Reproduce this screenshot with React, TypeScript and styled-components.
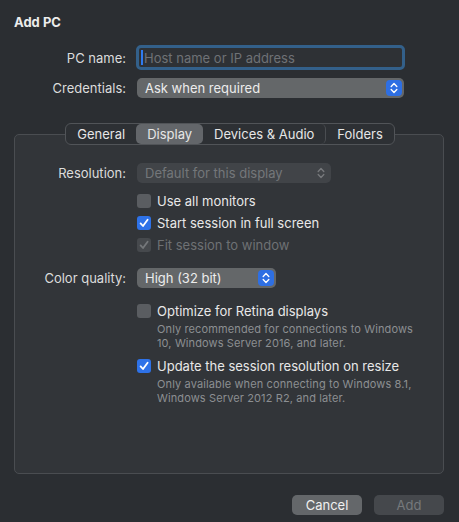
import React from "react";
import styled, { createGlobalStyle } from "styled-components";

const GlobalStyle = createGlobalStyle`
  html, body {
    margin: 0;
    padding: 0;
    background: #2b2e32;
  }
  body {
    font-family: "Inter", "Liberation Sans", sans-serif;
    -webkit-font-smoothing: antialiased;
  }
`;

const Stepper: React.FC<{ disabled?: boolean }> = ({ disabled }) => (
  <StepperBox $disabled={disabled}>
    <svg width="8" height="12" viewBox="0 0 8 12" fill="none">
      <path
        d="M1.2 4.4 L4 1.6 L6.8 4.4 M1.2 7.6 L4 10.4 L6.8 7.6"
        stroke={disabled ? "#74777a" : "#ffffff"}
        strokeWidth="1.4"
        strokeLinecap="round"
        strokeLinejoin="round"
      />
    </svg>
  </StepperBox>
);

const CheckMark: React.FC<{ color: string }> = ({ color }) => (
  <svg width="12" height="12" viewBox="0 0 12 12" fill="none">
    <path
      d="M2.6 6.4 L5 9 L9.6 2.8"
      stroke={color}
      strokeWidth="1.8"
      strokeLinecap="round"
      strokeLinejoin="round"
    />
  </svg>
);

type CheckProps = { checked?: boolean; disabled?: boolean; label: string };

const Check: React.FC<CheckProps> = ({ checked, disabled, label }) => (
  <CheckRow>
    <Box $checked={checked} $disabled={disabled}>
      {checked && <CheckMark color={disabled ? "#75787b" : "#ffffff"} />}
    </Box>
    <CheckLabel $disabled={disabled}>{label}</CheckLabel>
  </CheckRow>
);

const tabs = ["General", "Display", "Devices & Audio", "Folders"];

export default function App() {
  return (
    <>
      <GlobalStyle />
      <Window>
        <Title>Add PC</Title>
        <TopForm>
          <Label>PC name:</Label>
          <TextField>
            <Caret />
            <Placeholder>Host name or IP address</Placeholder>
          </TextField>
          <Label>Credentials:</Label>
          <Popup $width="267px">
            <PopupText>Ask when required</PopupText>
            <Stepper />
          </Popup>
        </TopForm>

        <Tabs>
          {tabs.map((t, i) => (
            <Tab key={t} $active={t === "Display"} $sep={i === 2}>
              {t}
            </Tab>
          ))}
        </Tabs>

        <Panel>
          <PanelForm>
            <Label>Resolution:</Label>
            <Popup $width="194px" $disabled>
              <PopupText $disabled>Default for this display</PopupText>
              <PlainChevrons>
                <svg width="8" height="12" viewBox="0 0 8 12" fill="none">
                  <path
                    d="M1.2 4.4 L4 1.6 L6.8 4.4 M1.2 7.6 L4 10.4 L6.8 7.6"
                    stroke="#77797c"
                    strokeWidth="1.4"
                    strokeLinecap="round"
                    strokeLinejoin="round"
                  />
                </svg>
              </PlainChevrons>
            </Popup>

            <Spacer />
            <CheckGroup $top="7px">
              <Check label="Use all monitors" />
              <Check checked label="Start session in full screen" />
              <Check checked disabled label="Fit session to window" />
            </CheckGroup>

            <Label $top="12px">Color quality:</Label>
            <Popup $width="139px" $top="12px">
              <PopupText>High (32 bit)</PopupText>
              <Stepper />
            </Popup>

            <Spacer />
            <CheckGroup $top="12px">
              <Check label="Optimize for Retina displays" />
              <Caption>
                Only recommended for connections to Windows
                <br />
                10, Windows Server 2016, and later.
              </Caption>
              <Gap />
              <Check checked label="Update the session resolution on resize" />
              <Caption>
                Only available when connecting to Windows 8.1,
                <br />
                Windows Server 2012 R2, and later.
              </Caption>
            </CheckGroup>
          </PanelForm>
        </Panel>

        <Buttons>
          <Button>Cancel</Button>
          <Button $disabled>Add</Button>
        </Buttons>
      </Window>
    </>
  );
}

const Window = styled.div`
  width: 459px;
  height: 522px;
  box-sizing: border-box;
  padding: 14px 15px 0 14px;
  display: flex;
  flex-direction: column;
  color: #e4e4e4;
  font-size: 13px;
`;

const Title = styled.div`
  font-weight: 700;
  font-size: 13px;
  line-height: 16px;
  color: #ececec;
`;

const TopForm = styled.div`
  margin-top: 15px;
  display: grid;
  grid-template-columns: 112px 1fr;
  column-gap: 10px;
  row-gap: 8px;
  align-items: center;
`;

const Label = styled.div<{ $top?: string }>`
  text-align: right;
  color: #dcdcdc;
  font-size: 13px;
  line-height: 16px;
  margin-top: ${(p) => p.$top || "0"};
`;

const TextField = styled.div`
  width: 269px;
  height: 25px;
  box-sizing: border-box;
  border: 3px solid #33608a;
  border-radius: 5px;
  background: #2e3135;
  display: flex;
  align-items: center;
  padding-left: 2px;
`;

const Caret = styled.div`
  width: 2px;
  height: 15px;
  background: #2f7bf0;
  margin-right: 1px;
`;

const Placeholder = styled.span`
  color: #6f7276;
  font-size: 13px;
`;

const Popup = styled.div<{ $width: string; $disabled?: boolean; $top?: string }>`
  width: ${(p) => p.$width};
  height: 20px;
  margin-top: ${(p) => p.$top || "0"};
  margin-left: 1px;
  box-sizing: border-box;
  border-radius: 5px;
  background: ${(p) => (p.$disabled ? "#414448" : "#646769")};
  display: flex;
  align-items: center;
  justify-content: space-between;
  padding: 0 2px 0 8px;
`;

const PopupText = styled.span<{ $disabled?: boolean }>`
  color: ${(p) => (p.$disabled ? "#74777a" : "#ececec")};
  font-size: 13px;
`;

const StepperBox = styled.div<{ $disabled?: boolean }>`
  width: 16px;
  height: 16px;
  border-radius: 4px;
  background: #2e6fe3;
  display: flex;
  align-items: center;
  justify-content: center;
`;

const PlainChevrons = styled.div`
  width: 16px;
  height: 16px;
  display: flex;
  align-items: center;
  justify-content: center;
`;

const Tabs = styled.div`
  margin-top: 25px;
  align-self: center;
  margin-left: 2px;
  position: relative;
  z-index: 1;
  display: flex;
  height: 22px;
  box-sizing: border-box;
  border: 1px solid #515458;
  border-radius: 6px;
  background: #2d3034;
`;

const Tab = styled.div<{ $active?: boolean; $sep?: boolean }>`
  display: flex;
  align-items: center;
  padding: 0 11px 1px;
  border-radius: 5px;
  color: #e6e6e6;
  font-size: 13px;
  background: ${(p) => (p.$active ? "#63666a" : "transparent")};
  border-right: ${(p) => (p.$sep ? "1px solid #4a4d51" : "none")};
`;

const Panel = styled.div`
  margin-top: -11px;
  height: 340px;
  box-sizing: border-box;
  border: 1px solid #4a4d51;
  border-radius: 5px;
  background: #323539;
`;

const PanelForm = styled.div`
  padding-top: 28px;
  display: grid;
  grid-template-columns: 111px 1fr;
  column-gap: 10px;
  align-items: center;
`;

const Spacer = styled.div``;

const CheckGroup = styled.div<{ $top: string }>`
  margin-top: ${(p) => p.$top};
  display: flex;
  flex-direction: column;
  margin-left: 1px;
`;

const CheckRow = styled.div`
  height: 22px;
  display: flex;
  align-items: center;
  gap: 6px;
`;

const Box = styled.div<{ $checked?: boolean; $disabled?: boolean }>`
  width: 14px;
  height: 14px;
  box-sizing: border-box;
  border-radius: 3px;
  display: flex;
  align-items: center;
  justify-content: center;
  background: ${(p) =>
    p.$disabled ? "#46494d" : p.$checked ? "#2e72e8" : "#5a5d61"};
`;

const CheckLabel = styled.span<{ $disabled?: boolean }>`
  color: ${(p) => (p.$disabled ? "#6e7174" : "#e8e8e8")};
  font-size: 13px;
`;

const Caption = styled.div`
  padding-left: 20px;
  font-size: 11px;
  letter-spacing: 0.12px;
  line-height: 14px;
  color: #8c8f92;
`;

const Gap = styled.div`
  height: 5px;
`;

const Buttons = styled.div`
  margin-top: 21px;
  display: flex;
  justify-content: flex-end;
  gap: 12px;
`;

const Button = styled.div<{ $disabled?: boolean }>`
  width: 70px;
  height: 20px;
  border-radius: 5px;
  display: flex;
  align-items: center;
  justify-content: center;
  font-size: 13px;
  background: ${(p) => (p.$disabled ? "#45484c" : "#64676a")};
  color: ${(p) => (p.$disabled ? "#76797c" : "#f0f0f0")};
`;
